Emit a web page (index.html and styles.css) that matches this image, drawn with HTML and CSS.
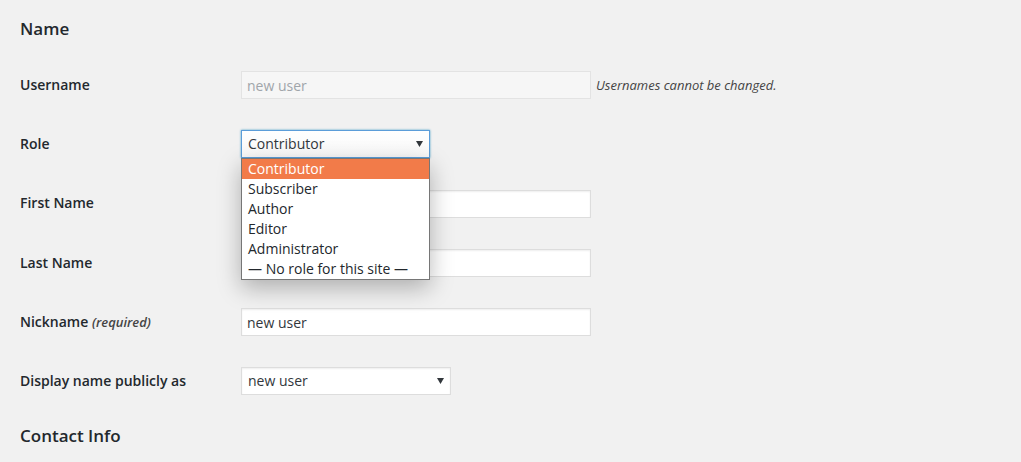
FILE: index.html
```html
<!DOCTYPE html>
<html lang="en">
<head>
    <meta charset="UTF-8">
    <title>Edit User</title>
    <link rel="stylesheet" href="styles.css">
</head>
<body>
    <h2 class="section-title">Name</h2>

    <div class="form-table">
        <div class="form-row">
            <label class="form-label" for="user_login">Username</label>
            <div class="form-field">
                <input class="text-input is-disabled" id="user_login" type="text" value="new user" readonly>
                <span class="description">Usernames cannot be changed.</span>
            </div>
        </div>

        <div class="form-row">
            <label class="form-label">Role</label>
            <div class="form-field">
                <div class="select select-role is-focused">
                    <span class="select-value">Contributor</span>
                    <svg class="select-arrow" width="7" height="6" viewBox="0 0 7 6"><path d="M0 0 H7 L3.5 6 Z" fill="#32373c"/></svg>

                    <!-- open option list -->
                    <ul class="select-list">
                        <li class="select-option is-active">Contributor</li>
                        <li class="select-option">Subscriber</li>
                        <li class="select-option">Author</li>
                        <li class="select-option">Editor</li>
                        <li class="select-option">Administrator</li>
                        <li class="select-option">— No role for this site —</li>
                    </ul>
                </div>
            </div>
        </div>

        <div class="form-row">
            <label class="form-label" for="first_name">First Name</label>
            <div class="form-field">
                <input class="text-input" id="first_name" type="text" value="">
            </div>
        </div>

        <div class="form-row">
            <label class="form-label" for="last_name">Last Name</label>
            <div class="form-field">
                <input class="text-input" id="last_name" type="text" value="">
            </div>
        </div>

        <div class="form-row">
            <label class="form-label" for="nickname">Nickname <span class="required">(required)</span></label>
            <div class="form-field">
                <input class="text-input" id="nickname" type="text" value="new user">
            </div>
        </div>

        <div class="form-row">
            <label class="form-label">Display name publicly as</label>
            <div class="form-field">
                <div class="select select-display">
                    <span class="select-value">new user</span>
                    <svg class="select-arrow" width="7" height="6" viewBox="0 0 7 6"><path d="M0 0 H7 L3.5 6 Z" fill="#32373c"/></svg>
                </div>
            </div>
        </div>
    </div>

    <h2 class="section-title section-contact">Contact Info</h2>
</body>
</html>
```

FILE: styles.css
```css
body {
    margin: 0;
    padding: 0 20px;
    background: #f1f1f1;
    color: #23282d;
    font-family: "Open Sans", "Liberation Sans", sans-serif;
    font-size: 14px;
    line-height: 1.3;
}
.section-title {
    margin: 18px 0 16px;
    font-size: 17px;
    line-height: 22px;
    font-weight: 600;
    color: #23282d;
}
.section-contact {
    margin-top: 13px;
}

/* form rows */
.form-row {
    display: flex;
    align-items: center;
    padding: 15px 0 16.25px;
}
.form-label {
    width: 221px;
    flex-shrink: 0;
    font-weight: 600;
    color: #23282d;
}
.required {
    font-size: 13px;
    font-style: italic;
    color: #444;
}
.form-field {
    display: flex;
    align-items: center;
    gap: 5px;
}
.text-input {
    box-sizing: border-box;
    width: 350px;
    height: 28px;
    margin: 0;
    padding: 3px 5px;
    border: 1px solid #ddd;
    background: #fff;
    box-shadow: inset 0 1px 2px rgba(0,0,0,0.07);
    font-family: inherit;
    font-size: 14px;
    color: #32373c;
    outline: none;
}
.text-input.is-disabled {
    background: #f6f6f6;
    border-color: #e3e3e3;
    color: #a0a5aa;
    box-shadow: none;
}
.description {
    font-size: 13px;
    font-style: italic;
    color: #444;
}

/* fake select */
.select {
    position: relative;
    box-sizing: border-box;
    height: 28px;
    display: flex;
    align-items: center;
    justify-content: space-between;
    padding: 0 6px 0 6px;
    border: 1px solid #ddd;
    background: #fff;
    box-shadow: inset 0 1px 2px rgba(0,0,0,0.07);
    color: #32373c;
}
.select-role {
    width: 189px;
}
.select-display {
    width: 210px;
}
.select.is-focused {
    border-color: #5b9dd9;
    box-shadow: 0 0 2px rgba(30,140,190,0.8);
    background: linear-gradient(#fff, #f8f8f8);
}
.select-arrow {
    display: block;
}
.select-list {
    position: absolute;
    top: 27px;
    left: -1px;
    box-sizing: border-box;
    width: 189px;
    margin: 0;
    padding: 0;
    list-style: none;
    background: #fff;
    border: 1px solid #767676;
    box-shadow: 0 8px 22px rgba(0,0,0,0.28);
    z-index: 2;
}
.select-option {
    height: 20px;
    line-height: 20px;
    padding: 0 6px;
    color: #23282d;
    white-space: nowrap;
}
.select-option.is-active {
    background: #f27b49;
    color: #fff;
}
```
